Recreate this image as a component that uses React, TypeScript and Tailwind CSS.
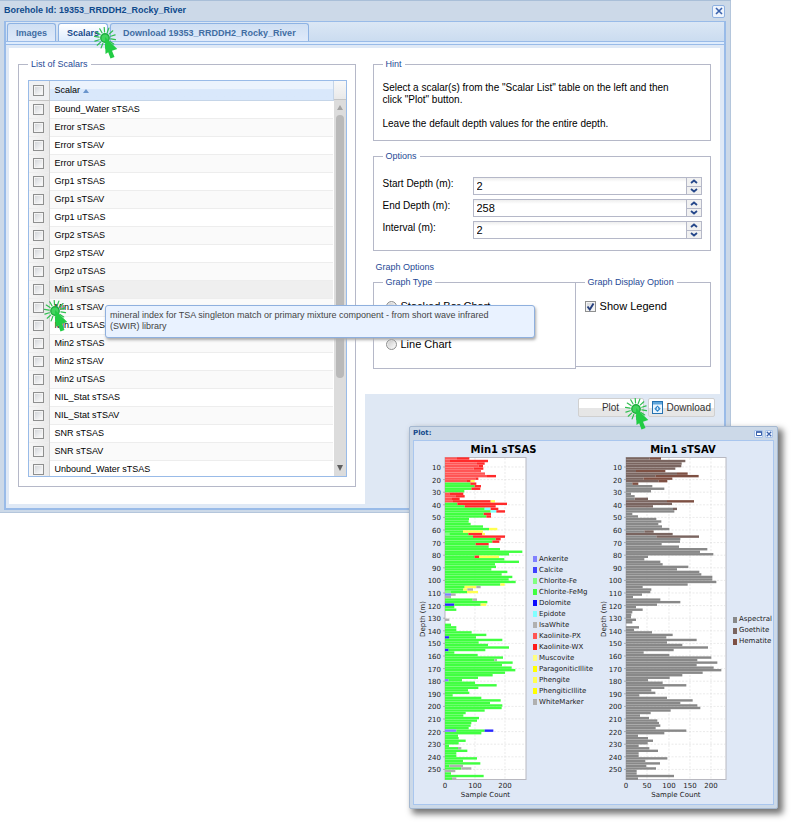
import React from "react";

const SCALARS = [
  "Bound_Water sTSAS", "Error sTSAS", "Error sTSAV", "Error uTSAS",
  "Grp1 sTSAS", "Grp1 sTSAV", "Grp1 uTSAS", "Grp2 sTSAS", "Grp2 sTSAV", "Grp2 uTSAS",
  "Min1 sTSAS", "Min1 sTSAV", "Min1 uTSAS", "Min2 sTSAS", "Min2 sTSAV", "Min2 uTSAS",
  "NIL_Stat sTSAS", "NIL_Stat sTSAV", "SNR sTSAS", "SNR sTSAV", "Unbound_Water sTSAS",
];

const COLORS: Record<string, string> = {
  a: "#8080ff", // Ankerite
  d: "#2828ff", // Calcite, Dolomite
  l: "#80ff80", // Chlorite-Fe
  g: "#40ff40", // Chlorite-FeMg
  e: "#80ffff", // Epidote
  w: "#b0b0b0", // IsaWhite, WhiteMarker
  p: "#ff5555", // Kaolinite-PX
  r: "#ff2a2a", // Kaolinite-WX
  y: "#ffff50", // Muscovite, Phengite
  s: "#888888", // Aspectral
  o: "#7a6560", // Goethite
  h: "#7e5043", // Hematite
};

// One entry per 2 m interval. Each token is a mineral key and the end of its
// segment, in thirds of a pixel; a bare number uses the chart's default mineral.
const STSAS = `p36r73,p15r129,p96r119,p101r114,p86r115,p108,p120,p126r153,p91r100,p66r77y89,76r94,89r108,79r106,58,p13r55,p31r59,p21r44,p24r137y150,37r186,59r152,119e137r160,137e154r180,116r138,124r138,72,71,77,114,132y157,54y114,l13g70r112y120,84r180,152r167,142r163,92r131,131,165,232,192,89r103y162,178,222,150,153,139,187,170,202,191,212,166y179,59y94w107,55y67w84,l18g66y99,a18w32,w18,83w96,127,d28g107y124,28,34,0,0,0,w13,0,18,34,34,80,124,d12g93,172,101,129,192,d11g121,28,98,174,148w156,203,171,200,211,180,143,99,a11g51,90,155,100,69,73,23,109,167,135,172,170,119,62,55,102,96,79,77,71,a34g119d145,109,39,41,62,41,12,39w49,67,34,34,96,54,106,g13w54,49w79,w31,18,116,21w34`;
const STSAV = `o71h105,o178,o167,o166,o148,o30h118,o153h185,o88h218,o53h139,o98h124,19h37,79,115,75,15,26,26o66,o123h204,o138,o81,141o153,145,19,36,91,106,97,108,130,55o83,o140,91o219,163,162,107,159,244,222,262,66,55,103,110,187,153,220,226,259,259,271,185,50,76,73,48,21,103,163,93,30,50,19,16,15,30,19,0,39,24,78,140,121,212,123,169,246,143,53,130,256,214,274,212,263,286,230,169,131,66,110,181,115,76,88,40,123,200,163,214,223,134,74,42,69,94,99,103,89,181,115,36,66,81,65,38,70,96,38,38,124,58,102,61,90,32,32,144,36`;

const LEGEND_LEFT: [string, string][] = [
  ["Ankerite", "#8080ff"], ["Calcite", "#4040ff"], ["Chlorite-Fe", "#80ff80"],
  ["Chlorite-FeMg", "#40ff40"], ["Dolomite", "#0a0aff"], ["Epidote", "#80ffff"],
  ["IsaWhite", "#b0b0b0"], ["Kaolinite-PX", "#ff5555"], ["Kaolinite-WX", "#ff1a1a"],
  ["Muscovite", "#ffff80"], ["ParagoniticIllite", "#ffff00"], ["Phengite", "#ffff50"],
  ["PhengiticIllite", "#ffff00"], ["WhiteMarker", "#b0b0b0"],
];
const LEGEND_RIGHT: [string, string][] = [
  ["Aspectral", "#888888"], ["Goethite", "#7a6560"], ["Hematite", "#7e5043"],
];

type ChartProps = {
  title: string;
  data: string;
  base: string;
  width: number;
  origin: number;
  plotWidth: number;
  ticks: { at: number; label: string }[];
};

function Chart({ title, data, base, width, origin, plotWidth, ticks }: ChartProps) {
  const depthY = (d: number) => 26 + (d - 10) * 1.26;
  const depths = Array.from({ length: 25 }, (_, i) => (i + 1) * 10);
  const mid = origin + plotWidth / 2;
  return (
    <svg width={width} height={363} className="shrink-0 overflow-visible" fontFamily="'DejaVu Sans', sans-serif" role="img" aria-label={title}>
      <text x={mid + (base === "g" ? 18 : 7)} y={12} fontSize={10} fontWeight="bold" textAnchor="middle">{title}</text>
      <rect x={origin} y={16.5} width={plotWidth} height={322} fill="#fff" stroke="#b8b8c0" />
      <g stroke="#dcdcdc" strokeWidth={0.6} strokeDasharray="2 1.5">
        {depths.map((d) => <line key={d} x1={origin} x2={origin + plotWidth} y1={depthY(d)} y2={depthY(d)} />)}
        {ticks.slice(1).map((t) => <line key={t.label} x1={origin + t.at} x2={origin + t.at} y1={17} y2={338} />)}
      </g>
      {data.split(",").map((row, i) => {
        const segs = Array.from(row.matchAll(/([a-z]?)(\d+)/g));
        let x = 0;
        return segs.map((m, k) => {
          const start = x;
          x = Number(m[2]) / 3;
          return <rect key={`${i}-${k}`} x={origin + start} y={16.3 + i * 2.52} width={x - start} height={2.4} fill={COLORS[m[1] || base]} />;
        });
      })}
      <g fontSize={7} fill="#222">
        {depths.map((d) => <text key={d} x={origin - 4} y={depthY(d) + 3} textAnchor="end">{d}</text>)}
        {ticks.map((t) => <text key={t.label} x={origin + t.at} y={347} textAnchor="middle">{t.label}</text>)}
      </g>
      <g stroke="#999" strokeWidth={0.7}>
        {depths.map((d) => <line key={d} x1={origin - 2} x2={origin} y1={depthY(d)} y2={depthY(d)} />)}
      </g>
      <text x={mid} y={356} fontSize={7} textAnchor="middle" fill="#222">Sample Count</text>
      <text transform={`translate(${origin - 20} 178) rotate(-90)`} fontSize={7} textAnchor="middle" fill="#222">Depth (m)</text>
    </svg>
  );
}

function Legend({ items }: { items: [string, string][] }) {
  return (
    <ul className="mt-4 self-center whitespace-nowrap font-['DejaVu_Sans',sans-serif] text-[7px] leading-[11px] text-[#222]">
      {items.map(([name, color]) => (
        <li key={name} className="flex items-center gap-0.5">
          <span className="h-1.5 w-1" style={{ backgroundColor: color }} />
          {name}
        </li>
      ))}
    </ul>
  );
}

function ClickCursor({ className }: { className: string }) {
  return (
    <svg width="24" height="34" viewBox="0 0 24 34" className={`pointer-events-none absolute z-30 ${className}`} aria-hidden="true">
      <g stroke="#2fbf50" strokeWidth="1.2" strokeLinecap="round">
        {Array.from({ length: 14 }, (_, i) => {
          const a = (i * Math.PI * 2) / 14 + 0.15;
          const c = Math.cos(a);
          const s = Math.sin(a);
          return <line key={i} x1={11 + c * 6} y1={11 + s * 6} x2={11 + c * 10.6} y2={11 + s * 10.6} />;
        })}
      </g>
      <circle cx="11" cy="11" r="4.2" fill="#43d45f" stroke="#1eae3e" strokeWidth="1.4" />
      <path d="M11 10 L11.500 27 L14.200 25.300 L16.500 31.500 L20.500 30 L18 23.800 L23.300 22 Z" fill="#22cc44" />
    </svg>
  );
}

const CHECK =
  "block size-[11px] shrink-0 appearance-none border border-[#8e8f8f] bg-gradient-to-br from-[#cfd2d6] to-white shadow-[inset_0_0_0_1px_#f4f4f4]";
const FIELDSET = "min-w-0 border border-[#b5b8c8]";
const LEGEND = "px-[3px] text-[9px] leading-[14px] text-[#1f4a96]";

function Field({ id, label, value }: { id: string; label: string; value: string }) {
  return (
    <div className="flex h-[18px]">
      <label htmlFor={id} className="w-[90px] shrink-0 text-[10px] leading-[14px]">{label}</label>
      <input id={id} defaultValue={value} className="min-w-0 flex-1 border border-[#b5b8c8] bg-gradient-to-b from-[#eee] to-white to-25% px-[3px] text-[11px] outline-none" />
      <div className="flex w-[15px] flex-col border-y border-r border-[#b5b8c8]">
        <button aria-label={`Increase ${label}`} className="flex flex-1 items-center justify-center border-b border-[#b5b8c8] bg-[#f1f1f1]">
          <svg width="8" height="5" viewBox="0 0 8 5"><path d="M1 4 L4 1.500 L7 4" fill="none" stroke="#25478a" strokeWidth="1.800" /></svg>
        </button>
        <button aria-label={`Decrease ${label}`} className="flex flex-1 items-center justify-center bg-[#f1f1f1]">
          <svg width="8" height="5" viewBox="0 0 8 5"><path d="M1 1 L4 3.500 L7 1" fill="none" stroke="#25478a" strokeWidth="1.800" /></svg>
        </button>
      </div>
    </div>
  );
}

function CloseGlyph({ size }: { size: number }) {
  return (
    <svg width={size} height={size} viewBox="0 0 8 8"><path d="M1 1 L7 7 M7 1 L1 7" stroke="#3a62ac" strokeWidth="1.600" /></svg>
  );
}

const TAB = "h-[18px] rounded-t-[3px] border border-b-0 border-[#8db2e3] text-[9px] font-bold leading-4";
const BUTTON = "flex h-[19px] items-center rounded-[2px] border border-[#d0d0d0] bg-gradient-to-b from-white from-50% to-[#e6e6e6] to-55% text-[10px] text-[#333]";

export default function App() {
  return (
    <div className="relative min-h-screen bg-white pr-[69px] font-['Liberation_Sans',Arial,sans-serif] text-black">
      <main className="border-t border-[#a9bfd8] bg-[#ccd9e8] pr-[5px] pb-[3px] pl-1 shadow-[inset_-1px_-1px_0_#b4c6dc]">
        <header className="flex h-5 items-center justify-between pr-px">
          <h1 className="text-[9px] font-bold text-[#0f4a8c]">Borehole Id: 19353_RRDDH2_Rocky_River</h1>
          <button aria-label="Close" className="flex size-[13px] items-center justify-center rounded-[2px] border border-[#8fb1e0] bg-[#eef4fd]">
            <CloseGlyph size={8} />
          </button>
        </header>
        <div className="border-x-2 border-t border-b-2 border-[#99bbe8] bg-[#99bbe8]">
          <nav className="flex h-5 items-end gap-0.5 border-b border-[#99bbe8] bg-gradient-to-b from-[#dbe7f5] to-[#cbdcf0] px-px">
            <button className={`${TAB} bg-gradient-to-b from-[#cfdff3] to-[#dfeafa] px-2 text-[#416da3]`}>Images</button>
            <button className={`${TAB} bg-gradient-to-b from-white to-[#deecfd] px-2 text-[#15498b]`}>Scalars</button>
            <button className={`${TAB} bg-gradient-to-b from-[#cfdff3] to-[#dfeafa] px-3 text-[#416da3]`}>Download 19353_RRDDH2_Rocky_River</button>
          </nav>
          <div className="h-0.5 bg-[#deecfd]" />
          <div className="mt-px border-t-[3px] border-r-4 border-b-4 border-l-[3px] border-[#dfe9f6] bg-white">
            <div className="grid grid-cols-2">
              <section className="pt-[9px] pr-[9px] pb-[17px] pl-[9px]">
                <fieldset className={`${FIELDSET} p-[9px] pr-2`}>
                  <legend className={LEGEND}>List of Scalars</legend>
                  <div className="flex h-[397px] overflow-hidden border border-[#99bbe8]">
                    <div className="min-w-0 flex-1 overflow-hidden">
                      <table className="w-full border-collapse text-left text-[9px]">
                        <thead>
                          <tr className="h-[19px] bg-gradient-to-b from-[#ebf3fd] from-40% to-[#d9e8fb] to-45%">
                            <th className="w-5 border-r border-b border-[#c5c5c5] bg-[#f0f1f3] p-0 pl-1">
                              <input type="checkbox" aria-label="Select all" className={CHECK} />
                            </th>
                            <th className="border-r border-b border-[#c5d5e8] p-0 pl-[5px] font-normal leading-3">
                              Scalar <svg className="inline" width="6" height="4" viewBox="0 0 6 4"><path d="M0 4 L3 0 L6 4 Z" fill="#6a95cc" /></svg>
                            </th>
                          </tr>
                        </thead>
                        <tbody>
                          {SCALARS.map((name, i) => (
                            <tr key={name} className={`h-[18px] border-b border-[#ededed] ${name === "Min1 sTSAS" ? "bg-[#efefef]" : i % 2 ? "bg-[#fafafa]" : "bg-white"}`}>
                              <td className="border-r border-[#d0d0d0] bg-gradient-to-r from-[#f6f6f6] to-[#e9e9e9] p-0 pl-1">
                                <input type="checkbox" id={`scalar-${i}`} className={CHECK} />
                              </td>
                              <td className="p-0 pl-[5px] leading-3">
                                <label htmlFor={`scalar-${i}`} className="block">{name}</label>
                              </td>
                            </tr>
                          ))}
                        </tbody>
                      </table>
                    </div>
                    <div className="flex w-3 flex-col items-center bg-[#dcdcdc]">
                      <div className="h-[19px] w-full shrink-0 border-b border-[#c5c5c5] bg-gradient-to-b from-[#f8f8f8] to-[#e9e9e9]" />
                      <svg className="my-[5px] shrink-0" width="6" height="5" viewBox="0 0 6 5"><path d="M0 5 L3 0 L6 5 Z" fill="#a3a3a3" /></svg>
                      <div className="h-[263px] w-2 rounded-full bg-[#b9b9b9]" />
                      <svg className="mt-auto mb-[5px]" width="6" height="6" viewBox="0 0 6 6"><path d="M0 0 L3 6 L6 0 Z" fill="#606060" /></svg>
                    </div>
                  </div>
                </fieldset>
              </section>

              <section className="flex flex-col pt-[9px]">
                <div className="pr-[9px] pl-2">
                  <fieldset className={`${FIELDSET} pt-[11px] pr-7 pb-[10px] pl-[9px] text-[10px] leading-3`}>
                    <legend className={LEGEND}>Hint</legend>
                    <p>Select a scalar(s) from the "Scalar List" table on the left and then click "Plot" button.</p>
                    <p className="mt-3">Leave the default depth values for the entire depth.</p>
                  </fieldset>
                  <fieldset className={`${FIELDSET} mt-2 pt-[14px] pr-2 pb-[11px] pl-[9px]`}>
                    <legend className={LEGEND}>Options</legend>
                    <div className="flex flex-col gap-1">
                      <Field id="start" label="Start Depth (m):" value="2" />
                      <Field id="end" label="End Depth (m):" value="258" />
                      <Field id="interval" label="Interval (m):" value="2" />
                    </div>
                  </fieldset>
                  <h2 className="mt-[9px] pl-[3px] text-[9px] leading-[14px] text-[#1f4a96]">Graph Options</h2>
                  <div className="grid grid-cols-[3fr_2fr] items-start pt-px">
                    <fieldset className={`${FIELDSET} px-[9px] pt-[11px] pb-[17px] text-[11px] leading-[13px]`}>
                      <legend className={LEGEND}>Graph Type</legend>
                      <div className="flex flex-col gap-[25px] pl-[3px]">
                        {["Stacked Bar Chart", "Line Chart"].map((label, i) => (
                          <label key={label} className="flex items-center gap-1">
                            <input type="radio" name="graph" defaultChecked={i === 0} className="size-[11px] appearance-none rounded-full border border-[#8e8f8f] bg-gradient-to-br from-[#c8c8c8] to-white shadow-[inset_0_0_0_1px_#eee]" />
                            {label}
                          </label>
                        ))}
                      </div>
                    </fieldset>
                    <fieldset className={`${FIELDSET} -ml-px px-[9px] pt-[11px] pb-[53px] text-[11px] leading-[13px]`}>
                      <legend className={LEGEND}>Graph Display Option</legend>
                      <label className="flex items-center gap-1">
                        <span className="relative">
                          <input type="checkbox" defaultChecked className={CHECK} />
                          <svg className="pointer-events-none absolute inset-0" width="11" height="11" viewBox="0 0 11 11"><path d="M2.500 5.500 L4.800 8.500 L8.500 2.500" fill="none" stroke="#27407e" strokeWidth="1.900" /></svg>
                        </span>
                        Show Legend
                      </label>
                    </fieldset>
                  </div>
                </div>
                <footer className="mt-[25px] flex flex-1 items-start justify-end gap-1 bg-[#dfe8f4] pt-1 pr-[5px]">
                  <button className={`${BUTTON} w-[66px] justify-center`}>Plot</button>
                  <button className={`${BUTTON} gap-1 px-[3px]`}>
                    <svg width="11" height="13" viewBox="0 0 11 13">
                      <rect x="0.500" y="0.500" width="10" height="12" fill="#eaf5fd" stroke="#2672b0" />
                      <rect x="1" y="1" width="9" height="2.500" fill="#5fa6dc" />
                      <path d="M5.500 4.500 L8.700 7.700 L5.500 10.900 L2.300 7.700 Z" fill="#2f86cc" />
                      <path d="M5.500 6 V8.500 M4.300 7.500 L5.500 8.900 L6.700 7.500" fill="none" stroke="#fff" strokeWidth="0.800" />
                    </svg>
                    Download
                  </button>
                </footer>
              </section>
            </div>
          </div>
        </div>
      </main>

      <div role="tooltip" className="absolute top-[305px] left-[105px] z-10 h-[33px] w-[430px] rounded-[3px] border border-[#8fb0de] bg-[#e9f2ff] px-1 pt-1 text-[9px] leading-[11px] text-[#444] shadow-[1px_2px_3px_#aaa]">
        mineral index for TSA singleton match or primary mixture component - from short wave infrared
        <br />
        (SWIR) library
      </div>

      <section aria-label="Plot" className="absolute top-[426px] left-[409px] z-20 w-[369px] rounded-[2px] border border-[#a5b8d0] bg-[#ccd9e8] px-[3px] pb-[3px] shadow-[4px_4px_6px_1px_#777]">
        <header className="flex h-[13px] items-center justify-between pr-px">
          <h2 className="font-['DejaVu_Sans',sans-serif] text-[7px] font-bold text-[#15498b]">Plot:</h2>
          <div className="flex gap-0.5">
            <button aria-label="Maximize" className="flex h-2 w-[9px] items-center justify-center rounded-[1px] border border-[#a9c4ea] bg-[#eef4fd]">
              <svg width="6" height="5" viewBox="0 0 6 5"><path d="M0.500 1 H5.500 V4.500 H0.500 Z" fill="#fff" stroke="#3a62ac" /><path d="M0 1 H6" stroke="#3a62ac" strokeWidth="1.500" /></svg>
            </button>
            <button aria-label="Close plot" className="flex size-2 items-center justify-center rounded-[1px] border border-[#a9c4ea] bg-[#eef4fd]">
              <CloseGlyph size={6} />
            </button>
          </div>
        </header>
        <div className="flex border border-[#a9c6ee] bg-[#dfe8f6]">
          <Chart
            title="Min1 sTSAS" data={STSAS} base="g" width={119} origin={31} plotWidth={81}
            ticks={[{ at: 0, label: "0" }, { at: 30, label: "100" }, { at: 60, label: "200" }]}
          />
          <div className="flex w-[67px] shrink-0"><Legend items={LEGEND_LEFT} /></div>
          <Chart
            title="Min1 sTSAV" data={STSAV} base="s" width={133} origin={26} plotWidth={100}
            ticks={[{ at: 0, label: "0" }, { at: 21, label: "50" }, { at: 43, label: "100" }, { at: 64, label: "150" }, { at: 85, label: "200" }]}
          />
          <Legend items={LEGEND_RIGHT} />
        </div>
      </section>

      <ClickCursor className="top-[27px] left-[94px]" />
      <ClickCursor className="top-[300px] left-[44px]" />
      <ClickCursor className="top-[398px] left-[625px]" />
    </div>
  );
}
